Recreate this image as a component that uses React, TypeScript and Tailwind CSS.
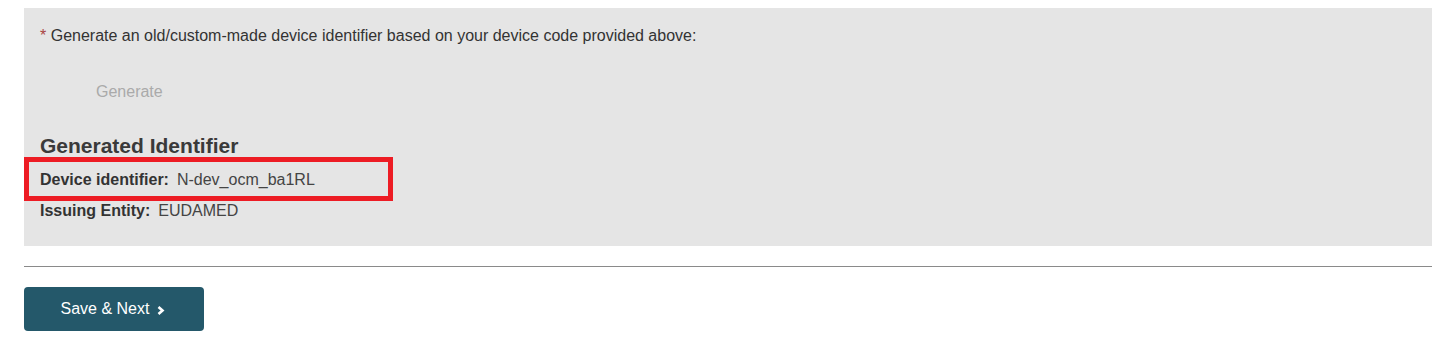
export default function App() {
  return (
    <div className="min-h-screen bg-white pt-2 pl-6 pr-[18px] font-['Liberation_Sans',Arial,sans-serif] text-[#333]">
      {/* Generate panel */}
      <div className="bg-[#e5e5e5] pl-4 pt-[18px] pb-[25px]">
        <p className="h-5 text-[16px] leading-5">
          <span className="text-[#a94442]">*</span> Generate an old/custom-made device identifier based on your device code provided above:
        </p>
        <button
          disabled
          className="mt-[26px] ml-10 block h-10 px-4 text-[16px] leading-10 text-[#aaa]"
        >
          Generate
        </button>
        <h3 className="mt-[20px] h-7 text-[21px] font-bold leading-7 text-[#3a3a3a]">
          Generated Identifier
        </h3>
        <div className="-ml-4 -mt-[3px] flex h-[44px] w-[369px] items-center border-[5px] border-[#ed1c24] pl-[11px] pt-[2px] text-[16px]">
          <span className="font-bold text-[#333]">Device identifier:</span>
          <span className="ml-[8px] text-[#444]">N-dev_ocm_ba1RL</span>
        </div>
        <div className="flex h-5 items-center text-[16px] leading-5">
          <span className="font-bold text-[#333]">Issuing Entity:</span>
          <span className="ml-[8px] text-[#444]">EUDAMED</span>
        </div>
      </div>

      <div className="mt-5 h-px bg-[#8a8a8a]" />

      <button className="mt-5 flex h-[44px] w-[180px] items-center justify-center gap-[8px] rounded-[4px] bg-[#24586a] pr-[2px] text-[16px] text-white">
        <span>Save &amp; Next</span>
        <svg width="8" height="9" viewBox="0 0 8 9" className="mt-[2px]">
          <path d="M1.5 1 L5.5 4.5 L1.5 8" fill="none" stroke="white" strokeWidth="2.6" />
        </svg>
      </button>
    </div>
  );
}
